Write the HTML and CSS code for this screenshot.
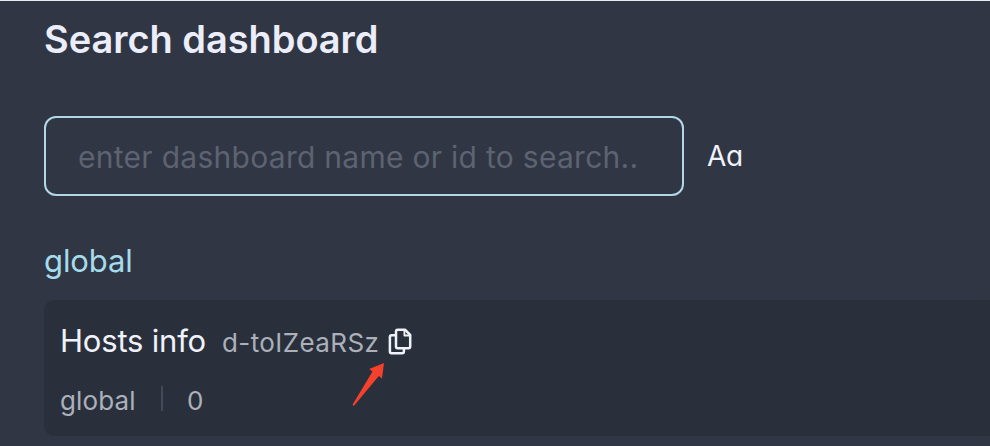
FILE: index.html
```html
<!DOCTYPE html>
<html lang="en">
<head>
<meta charset="utf-8">
<title>Search dashboard</title>
<link rel="stylesheet" href="styles.css">
</head>
<body>
<main class="drawer">
  <h1 class="title"><span>Search dashboard</span></h1>
  <div class="search-row">
    <input class="search" type="text" placeholder="enter dashboard name or id to search..">
    <span class="case-toggle">Aa</span>
  </div>
  <h2 class="group"><span>global</span></h2>
  <section class="card">
    <div class="card-head">
      <span class="name">Hosts info</span>
      <span class="id">d-toIZeaRSz</span>
      <svg class="copy" viewBox="0 0 24 28" fill="none" stroke="currentColor" stroke-width="2.5" stroke-linejoin="round">
        <path d="M9.7 1.7H17L22.2 7V18.6Q22.2 20.3 20.5 20.3H9.7Q8 20.3 8 18.6V3.4Q8 1.7 9.7 1.7Z"/>
        <path d="M16.4 2V7.5H22" stroke-width="1.8"/>
        <path d="M8 7.2H3.6Q1.9 7.2 1.9 8.9V23.6Q1.9 25.3 3.6 25.3H14.2Q15.9 25.3 15.9 23.6V20.3"/>
      </svg>
    </div>
    <div class="meta">
      <span class="team">global</span>
      <span class="divider"></span>
      <span class="count">0</span>
    </div>
    <svg class="arrow" viewBox="0 0 34 48">
      <path d="M32 1L30 16.5L26.8 14L2.2 43.5Q.5 44.5 .8 42.3L20.5 9.4L17.2 7Z" fill="#f5402c"/>
    </svg>
  </section>
</main>
</body>
</html>
```
FILE: styles.css
```css
* {
  box-sizing: border-box;
}

body {
  margin: 0;
  height: 446px;
  overflow: hidden;
  background: #303644;
  font-family: Inter, "Liberation Sans", sans-serif;
  color: #f0f2fa;
}

.drawer {
  height: 446px;
  border-top: 1px solid #e4edf2;
  padding-left: 44px;
}

.title {
  margin: 0;
  padding-top: 14px;
  font-size: 38px;
  line-height: 48px;
  font-weight: 600;
  letter-spacing: -0.05px;
  color: #ebeefa;
}

.search-row {
  display: flex;
  align-items: center;
  margin-top: 53px;
}

.search {
  width: 640px;
  height: 80px;
  padding: 2px 32px 0;
  border: 2px solid #b2d8e6;
  border-radius: 12px;
  background: transparent;
  font: 400 30px Inter, "Liberation Sans", sans-serif;
  letter-spacing: 0.28px;
  outline: none;
}

.search::placeholder {
  color: #5d6370;
  opacity: 1;
}

.case-toggle {
  margin-left: 23px;
  font-size: 28px;
  letter-spacing: -0.4px;
  font-feature-settings: "cv11";
}

.group {
  margin: 45px 0 0;
  font-size: 31px;
  line-height: 40px;
  font-weight: 400;
  letter-spacing: -0.1px;
  color: #a5dcec;
}

.card {
  position: relative;
  height: 136px;
  margin-top: 19px;
  padding: 21px 16px 0;
  border-radius: 10px 0 0 10px;
  background: #29303c;
}

.card-head {
  display: flex;
  align-items: baseline;
  height: 40px;
  line-height: 40px;
}

.name {
  width: 162px;
  font-size: 31px;
  letter-spacing: -0.2px;
}

.id {
  width: 166px;
  font-size: 26px;
  letter-spacing: 0.4px;
  color: #abb0ba;
}

.copy {
  width: 24px;
  height: 28px;
  align-self: flex-start;
  margin-top: 7px;
}

.meta {
  display: flex;
  align-items: center;
  height: 36px;
  margin-top: 21px;
  font-size: 26px;
  letter-spacing: 0.15px;
  color: #abb0ba;
}

.team {
  width: 101px;
}

.divider {
  width: 2px;
  height: 25px;
  margin: 0 24px 4px 0;
  background: #434956;
}

.arrow {
  position: absolute;
  left: 308px;
  top: 62px;
  width: 34px;
  height: 48px;
}
```
